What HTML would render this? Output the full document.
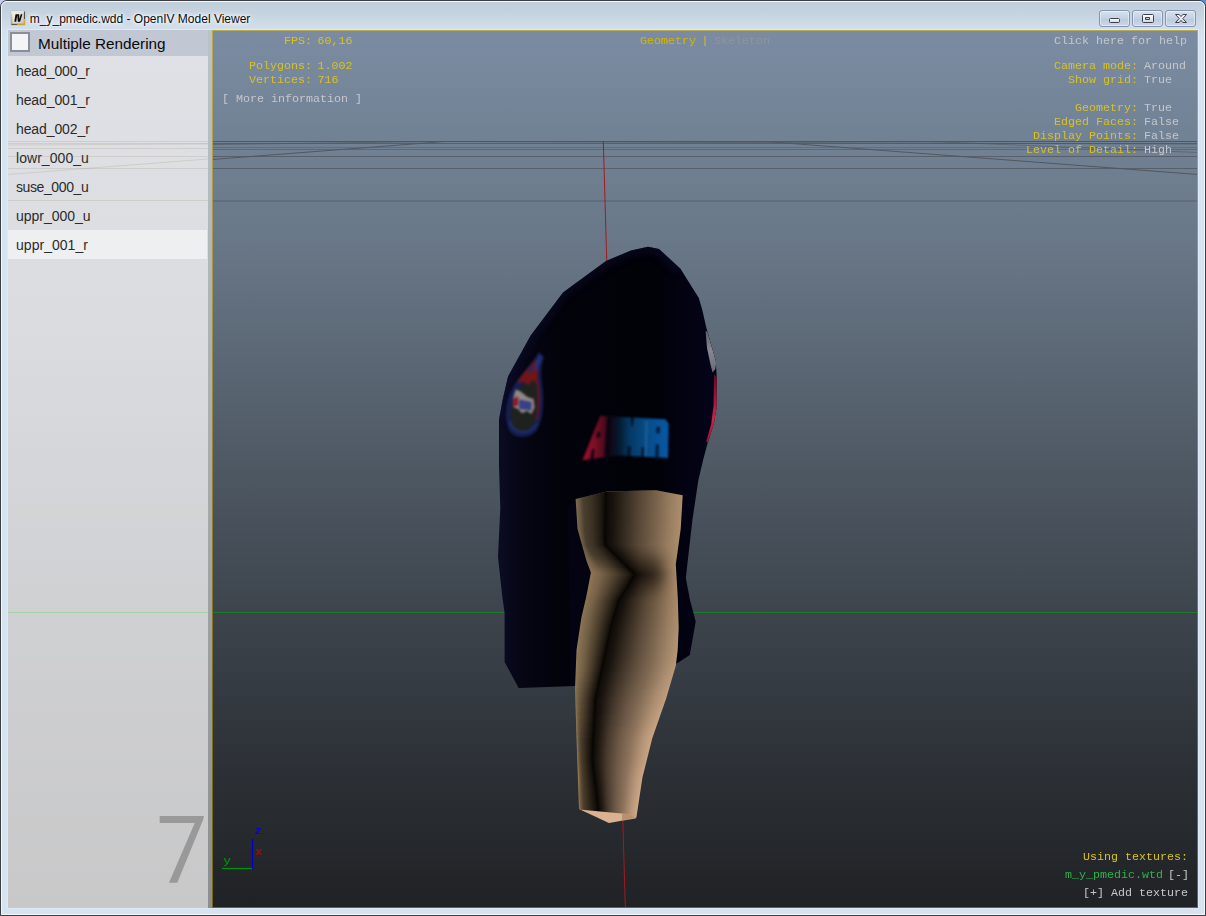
<!DOCTYPE html>
<html>
<head>
<meta charset="utf-8">
<title>m_y_pmedic.wdd - OpenIV Model Viewer</title>
<style>
html,body{margin:0;padding:0;}
body{width:1206px;height:916px;overflow:hidden;background:#5b8fd6;font-family:"Liberation Sans",sans-serif;position:relative;}
#win{position:absolute;left:0;top:0;width:1204px;height:914px;border:1px solid #3d3e41;border-radius:7px 7px 0 0;
 background:linear-gradient(#c0cddb 0px,#c5d2df 12px,#d3e0ee 30px,#d6e3f1 40px);}
#win:before{content:"";position:absolute;left:0;top:0;right:0;bottom:0;border:1px solid #f2f7fc;border-radius:6px 6px 0 0;}
#title{position:absolute;left:28.8px;top:11px;font-size:12px;line-height:14px;color:#0c0c10;white-space:nowrap;letter-spacing:0px;
 text-shadow:0 0 6px #fff,0 0 6px #fff,0 0 3px #fff;}
.cb{position:absolute;top:9px;width:29px;height:15px;border:1px solid #8494b4;border-radius:3px;
 background:linear-gradient(#d6e1ee,#c3d1e2 50%,#b9c9dd 51%,#cbd8e8);box-shadow:inset 0 0 0 1px rgba(255,255,255,.45);}
#left{position:absolute;left:8px;top:30px;width:200px;height:878px;background:linear-gradient(#dfe1e6 0px,#dcdde1 260px,#d0d1d3 560px,#c8c8c9 878px);}
#hdr{position:absolute;left:0;top:0;width:204px;height:26px;background:#c1c7d3;}
#chk{position:absolute;left:2px;top:2px;width:16px;height:16px;border:2px solid #8a8f97;background:#f3f4f6;}
#hdrtxt{position:absolute;left:30px;top:3.6px;font-size:15.3px;line-height:20px;color:#0a0a0a;white-space:nowrap;}
.it{position:absolute;left:0;width:199px;height:29px;letter-spacing:-0.1px;font-size:14px;line-height:30px;color:#2b2b2b;text-indent:8px;white-space:nowrap;}
#split{position:absolute;left:208px;top:30px;width:4px;height:878px;background:linear-gradient(#bcc1cb,#a6a8ac 55%,#8c8d90);}
#vp{position:absolute;left:212px;top:30px;width:986px;height:878px;background:linear-gradient(#7b8ca2 0px,#6a7989 200px,#4e5863 440px,#3b424a 600px,#2a2e33 760px,#202225 878px);overflow:hidden;}
#vp svg{position:absolute;left:0;top:0;}
#vpb{position:absolute;left:212px;top:30px;width:984px;height:876px;border:1px solid #a89c3c;border-image:linear-gradient(#b6aa4c,#a2953a 30%,#7d6e18 75%,#74650f) 1;pointer-events:none;}
.h{position:absolute;font-family:"Liberation Mono",monospace;font-size:11.67px;line-height:14px;white-space:pre;color:#d8c222;}
.g{color:#c4c7cc;}
.v{position:relative;left:-1px;}
</style>
</head>
<body>
<div style="position:absolute;left:0;top:0;width:8px;height:8px;background:#c6cef2"></div>
<div id="win">
 <div id="title">m_y_pmedic.wdd - OpenIV Model Viewer</div>
 <div class="cb" style="left:1098px"></div>
 <div class="cb" style="left:1131px"></div>
 <div class="cb" style="left:1164px"></div>
</div>

<svg id="chrome" width="1206" height="32" style="position:absolute;left:0;top:0">
 <defs>
  <linearGradient id="icg" x1="0" y1="0" x2="0" y2="1"><stop offset="0" stop-color="#f3ead0"/><stop offset=".35" stop-color="#e6c464"/><stop offset="1" stop-color="#cf9c1e"/></linearGradient>
  <linearGradient id="ici" x1="0" y1="0" x2="1" y2="1"><stop offset="0" stop-color="#f4f4f4"/><stop offset="1" stop-color="#c6c6c6"/></linearGradient>
  <linearGradient id="glg" x1="0" y1="0" x2="0" y2="1"><stop offset="0" stop-color="#ffffff"/><stop offset="1" stop-color="#d4d6da"/></linearGradient>
  <filter id="icb" color-interpolation-filters="sRGB"><feGaussianBlur stdDeviation="0.35"/></filter>
 </defs>
 <g filter="url(#icb)">
  <rect x="10.6" y="10.6" width="14.8" height="14.8" rx="1" fill="#9db0c8" opacity=".5"/>
  <rect x="11" y="11" width="14" height="14" rx=".8" fill="url(#icg)"/>
  <path d="M24.4 11.5V19" stroke="#4a4a48" stroke-width="1.1"/>
  <path d="M11.5 24.5H17" stroke="#5a5648" stroke-width="1"/>
  <rect x="12.4" y="12.2" width="11.2" height="11.3" fill="url(#ici)"/>
  <path d="M14.3 21.8L15.5 14.3L17.4 14.3L16.2 21.8Z M17.1 14.3L19.1 14.3L19.5 19L20.7 14.3L22.4 14.3L20.1 21.8L17.9 21.8Z" fill="#0a0a0a"/>
 </g>
 <!-- caption glyphs -->
 <g stroke="#3c414d" stroke-width="1" fill="url(#glg)">
  <rect x="1109.5" y="18.5" width="10" height="4" rx="1"/>
  <path d="M1143.5 14.5h9a1 1 0 0 1 1 1v6a1 1 0 0 1 -1 1h-9a1 1 0 0 1 -1 -1v-6a1 1 0 0 1 1 -1Z M1145.5 17.5v2h4v-2Z" fill-rule="evenodd"/>
  <path d="M1175.5 14.5h3.7l1.8 2.1l1.8 -2.1h3.7l-3.7 4l3.7 4h-3.7l-1.8 -2.1l-1.8 2.1h-3.7l3.7 -4Z" stroke-linejoin="round"/>
 </g>
</svg>
<div style="position:absolute;left:7px;top:29px;width:1190px;height:878px;border:1px solid #dde9f8"></div>
<div id="left">
 <div id="hdr"><div id="chk"></div><div id="hdrtxt">Multiple Rendering</div></div>
 <div class="it" style="top:26px">head_000_r</div>
 <div class="it" style="top:55px">head_001_r</div>
 <div class="it" style="top:84px">head_002_r</div>
 <div class="it" style="top:113px;letter-spacing:.05px">lowr_000_u</div>
 <div class="it" style="top:142px;letter-spacing:-.4px">suse_000_u</div>
 <div class="it" style="top:171px;letter-spacing:-.03px">uppr_000_u</div>
 <div class="it" style="top:200px;background:#eeeff1;letter-spacing:.03px">uppr_001_r</div>
 <svg style="position:absolute;left:0;top:0" width="200" height="877" viewBox="8 30 200 877"><path d="M159.7 815.9H204L203.2 819.6L177.3 882.8H169L194.7 822.9H159.7Z" fill="#999999"/><path d="M8 612.5H208" stroke="#6fd070" stroke-width="1" opacity=".4"/><g stroke="#9c8c74" stroke-width="1" fill="none" opacity=".22"><path d="M8 141.5H208M8 143.5H208M8 148.5H208M8 156.5H208M8 168.5H208M8 200.5H208M8 174.5L208 159M8 145L208 144"/></g></svg>
</div>
<div id="split"></div>
<div id="vp">
<svg id="scene" width="986" height="878" viewBox="212 30 986 878">
<defs>
 <filter color-interpolation-filters="sRGB" id="b1" x="-20%" y="-20%" width="140%" height="140%"><feGaussianBlur stdDeviation="0.6"/></filter>
 <filter color-interpolation-filters="sRGB" id="b08" x="-10%" y="-5%" width="120%" height="110%"><feGaussianBlur stdDeviation="0.6"/></filter>
 <filter color-interpolation-filters="sRGB" id="b09" x="-20%" y="-20%" width="140%" height="140%"><feGaussianBlur stdDeviation="0.9"/></filter>
 <filter color-interpolation-filters="sRGB" id="b2" x="-30%" y="-30%" width="160%" height="160%"><feGaussianBlur stdDeviation="2"/></filter>
 <filter color-interpolation-filters="sRGB" id="b4" x="-50%" y="-50%" width="200%" height="200%"><feGaussianBlur stdDeviation="4"/></filter>
 <filter color-interpolation-filters="sRGB" id="b7" x="-50%" y="-50%" width="200%" height="200%"><feGaussianBlur stdDeviation="7"/></filter>
</defs>
<!-- grid -->
<g stroke="#3d3d3f" stroke-width="1" fill="none" opacity=".6">
 <path d="M212 141.5H1198"/>
 <path d="M212 143.5H1198" opacity=".8"/>
 <path d="M212 144.5L440 141.5L1198 144" opacity=".7"/>
 <path d="M212 147.5H1198" opacity=".45"/>
 <path d="M212 149.5H1198" opacity=".6"/>
 <path d="M212 156.5H1198" opacity=".8"/>
 <path d="M212 168.5H1198" opacity=".8"/>
 <path d="M212 201H1198" stroke-width="1.2" opacity=".7"/>
 <path d="M212 159.5L445 141.5"/>
 <path d="M765 141.5L1198 174.5"/>
 <path d="M930 141.5L1198 152.5" opacity=".6"/>
</g>
<!-- green horizon -->
<path d="M212 612.5H1198" stroke="#1f7a2e" stroke-width="1"/>
<!-- red axis -->
<path d="M603.3 141L625.3 907" stroke="#a01c22" stroke-width="1" fill="none"/>

<defs>
 <linearGradient id="shg" x1="498" y1="0" x2="716" y2="0" gradientUnits="userSpaceOnUse">
  <stop offset="0" stop-color="#0b0b25"/><stop offset=".1" stop-color="#060615"/><stop offset=".3" stop-color="#02020a"/><stop offset=".7" stop-color="#010108"/><stop offset="1" stop-color="#04041a"/>
 </linearGradient>
 <linearGradient id="skin" x1="575" y1="0" x2="682" y2="0" gradientUnits="userSpaceOnUse">
  <stop offset="0" stop-color="#b08f6a"/><stop offset=".5" stop-color="#a58663"/><stop offset="1" stop-color="#c39c79"/>
 </linearGradient>
 <clipPath id="armclip"><path id="armp" d="M575.6 499L607 491.4L656 490.2L682.7 495.3L680.7 529L675.8 564.5L677.8 598L678.7 627.4L677.7 650L675.8 665.7L666 699L652.2 738.4L642.4 777.7L636.5 817L635.5 818.6L609 823L579 809L576.5 738.4L575 689L576.5 650L581.4 617.6L586.4 596L590.9 572.4L586.4 560.6L577.5 529Z"/></clipPath>
 <clipPath id="shclip"><path d="M648 246.8L659 249L680.5 268.8L698.8 298L702.3 310L706.4 328L715.8 360.8L716.8 378.8L716.5 408.3L713.6 424.6L707.8 442.6L703.1 460L698.4 480L692.4 520L685.8 578L690 600L695.7 621.5L689.8 655L678 662.8L640 680L575 686L518.7 688L504.6 662L504.6 613L502.3 596.7L498 557L500.3 508L499 465.6L499 419.8L502.6 400L508 376.6L530.7 335.6L563 292.5L606 261L631 250.5Z"/></clipPath>
</defs>
<!-- shirt -->
<defs>
 <linearGradient id="amrg" x1="582" y1="0" x2="669" y2="0" gradientUnits="userSpaceOnUse">
  <stop offset="0" stop-color="#96122c"/><stop offset=".12" stop-color="#860f28"/><stop offset=".26" stop-color="#4a0a1c"/><stop offset=".34" stop-color="#12081a"/><stop offset=".42" stop-color="#04182c"/><stop offset=".55" stop-color="#063a66"/><stop offset=".75" stop-color="#074c88"/><stop offset="1" stop-color="#0958a6"/>
 </linearGradient>
 <linearGradient id="wst" x1="0" y1="330" x2="0" y2="372" gradientUnits="userSpaceOnUse"><stop offset="0" stop-color="#7c7c86"/><stop offset=".5" stop-color="#b4b4ba"/><stop offset="1" stop-color="#8c8c94"/></linearGradient>
 <linearGradient id="mst" x1="0" y1="374" x2="0" y2="444" gradientUnits="userSpaceOnUse"><stop offset="0" stop-color="#5a0c26"/><stop offset=".35" stop-color="#a01638"/><stop offset=".65" stop-color="#d2204c"/><stop offset="1" stop-color="#8a1232"/></linearGradient>
</defs>
<g clip-path="url(#shclip)">
 <rect x="490" y="240" width="235" height="455" fill="url(#shg)"/>
 <path d="M499 420L508 376L531 335L563 292L606 261L631 250L648 247L659 249L680 269" stroke="#0e0e30" stroke-width="8" fill="none" filter="url(#b4)" opacity=".7"/>
 <!-- inner back of shirt next to arm -->
 <path d="M568 508L576 500L577 530L590 572L580 620L576 686L570 686Z" fill="#06061a" filter="url(#b1)" opacity=".55"/>
 <!-- AMR sleeve logo -->
 <g filter="url(#b09)">
  <path d="M600.2 415.8L665.5 419.3L668.6 423.7L668.1 458L618.5 455.6L582.4 460.2Z" fill="url(#amrg)"/>
  <path d="M589.8 461L592 449L594.5 449L593.7 461Z M595.5 437.5L598 431.5L600.5 432L600 437.6Z M604 460L607 417L611 417L610 460Z" fill="#030310" opacity=".85"/>
  <path d="M630.5 416L634.2 416.5L633 426L631 426Z M627 457L628 446L630.8 446L630.5 457Z M641 457L641.6 447L644 447L643.8 457Z M656.4 427L660 427L659.6 433.5L656.2 433Z M655.3 457.5L655.8 444.5L658.8 444.5L658.5 457.5Z" fill="#030a18" opacity=".75"/>
  <path d="M645.6 421L647.6 421L646.6 456L644.8 456Z" fill="#3a78a8" opacity=".5"/>
 </g>
 <!-- badge -->
 <g filter="url(#b09)" opacity=".88">
  <path d="M539 352C533 363 518.5 375 510.5 392C504.5 406 504.5 425 511 432.5C517.5 439.5 531 438.5 537.5 429C543.5 418 544.5 400 542 384C540.5 372 541.5 362 544.5 357Z" fill="#18225a"/>
  <path d="M533 378.5C525 382 516 389.5 512 401.5C509.3 414 510 424.5 515.3 429C521.5 433.5 530 431 534 423C538 412 538.5 396 536.5 384Z" fill="#232721"/>
  <path d="M536 359.5C531 366 522 373 516.5 384L523 381.5L528 385L533 380L537.6 384.5C537.4 375 538 367 539.6 360Z" fill="#82181a"/>
  <path d="M538 379C541 392 540.4 408 537.2 421L535.6 420C538 408 538 392 536 380Z" fill="#741824"/>
  <path d="M538.6 355L542.2 357.5L536.6 371L533.6 369.6Z" fill="#28388c"/>
  <path d="M528 372L531 366L532.5 367L530 374Z" fill="#223078"/>
  <path d="M515.5 389.5L520 391L527.5 397L533.6 399L534.6 407.5L531.5 414L527 411L522 413.2L518 409L513.3 407L513.2 398Z" fill="#a39b93"/>
  <path d="M513.4 398.5L518 396.5L518.2 405.5L513.2 406.5Z" fill="#a41a2e"/>
  <path d="M519 399.5L531.6 402L531.2 410.6L519.2 409Z" fill="#2e3c94" opacity=".85"/>
  <path d="M509.8 421C512.5 433.5 528 437 537.3 423.5" stroke="#26367a" stroke-width="2.2" fill="none"/>
 </g>
 <!-- right edge stripes -->
 <path d="M705.6 331L707.4 331.5L716.2 362L715.4 369L712.6 372.5L710.6 365L707 348Z" fill="url(#wst)" filter="url(#b1)" opacity=".75"/>
 <path d="M714 374.5L717 377L717 408L714 426L708.5 443L706.2 441.5L711.2 424L713.6 405L713.8 385Z" fill="url(#mst)" filter="url(#b1)"/>
</g>
<!--ARM-BEGIN-->
<defs><linearGradient id="vel" x1="0" y1="488" x2="0" y2="812" gradientUnits="userSpaceOnUse"><stop offset="0.000" stop-color="#7c6a4f"/><stop offset="0.207" stop-color="#7c6a4f"/><stop offset="0.269" stop-color="#94795a"/><stop offset="0.469" stop-color="#8c7756"/><stop offset="0.787" stop-color="#967c58"/><stop offset="1.000" stop-color="#967c58"/></linearGradient><linearGradient id="ver" x1="0" y1="488" x2="0" y2="812" gradientUnits="userSpaceOnUse"><stop offset="0.000" stop-color="#ad8e6e"/><stop offset="0.176" stop-color="#ad8e6e"/><stop offset="0.269" stop-color="#a48463"/><stop offset="0.469" stop-color="#b29474"/><stop offset="0.787" stop-color="#cba686"/><stop offset="1.000" stop-color="#cba686"/></linearGradient><linearGradient id="alu0"><stop offset="0" stop-color="#0a0704" stop-opacity="0.00"/><stop offset="0.1" stop-color="#0a0704" stop-opacity="0.14"/><stop offset="0.25" stop-color="#0a0704" stop-opacity="0.43"/><stop offset="0.55" stop-color="#0a0704" stop-opacity="0.58"/><stop offset="0.82" stop-color="#0a0704" stop-opacity="0.80"/><stop offset="1" stop-color="#0a0704" stop-opacity="1.00"/></linearGradient><linearGradient id="ar0"><stop offset="0" stop-color="#0a0704" stop-opacity="0.99"/><stop offset="0.1" stop-color="#0a0704" stop-opacity="0.91"/><stop offset="0.25" stop-color="#0a0704" stop-opacity="0.74"/><stop offset="0.45" stop-color="#0a0704" stop-opacity="0.52"/><stop offset="0.65" stop-color="#0a0704" stop-opacity="0.33"/><stop offset="0.85" stop-color="#0a0704" stop-opacity="0.12"/><stop offset="1" stop-color="#0a0704" stop-opacity="0.00"/></linearGradient><linearGradient id="alu2"><stop offset="0" stop-color="#0a0704" stop-opacity="0.00"/><stop offset="0.1" stop-color="#0a0704" stop-opacity="0.13"/><stop offset="0.25" stop-color="#0a0704" stop-opacity="0.40"/><stop offset="0.55" stop-color="#0a0704" stop-opacity="0.57"/><stop offset="0.82" stop-color="#0a0704" stop-opacity="0.80"/><stop offset="1" stop-color="#0a0704" stop-opacity="1.00"/></linearGradient><linearGradient id="alu3"><stop offset="0" stop-color="#0a0704" stop-opacity="0.01"/><stop offset="0.1" stop-color="#0a0704" stop-opacity="0.13"/><stop offset="0.25" stop-color="#0a0704" stop-opacity="0.38"/><stop offset="0.55" stop-color="#0a0704" stop-opacity="0.56"/><stop offset="0.82" stop-color="#0a0704" stop-opacity="0.80"/><stop offset="1" stop-color="#0a0704" stop-opacity="1.00"/></linearGradient><linearGradient id="alu5"><stop offset="0" stop-color="#0a0704" stop-opacity="0.01"/><stop offset="0.1" stop-color="#0a0704" stop-opacity="0.13"/><stop offset="0.25" stop-color="#0a0704" stop-opacity="0.35"/><stop offset="0.55" stop-color="#0a0704" stop-opacity="0.55"/><stop offset="0.82" stop-color="#0a0704" stop-opacity="0.79"/><stop offset="1" stop-color="#0a0704" stop-opacity="1.00"/></linearGradient><linearGradient id="alu7"><stop offset="0" stop-color="#0a0704" stop-opacity="0.01"/><stop offset="0.1" stop-color="#0a0704" stop-opacity="0.12"/><stop offset="0.25" stop-color="#0a0704" stop-opacity="0.32"/><stop offset="0.55" stop-color="#0a0704" stop-opacity="0.53"/><stop offset="0.82" stop-color="#0a0704" stop-opacity="0.79"/><stop offset="1" stop-color="#0a0704" stop-opacity="1.00"/></linearGradient><linearGradient id="alu8"><stop offset="0" stop-color="#0a0704" stop-opacity="0.02"/><stop offset="0.1" stop-color="#0a0704" stop-opacity="0.12"/><stop offset="0.25" stop-color="#0a0704" stop-opacity="0.30"/><stop offset="0.55" stop-color="#0a0704" stop-opacity="0.53"/><stop offset="0.82" stop-color="#0a0704" stop-opacity="0.79"/><stop offset="1" stop-color="#0a0704" stop-opacity="1.00"/></linearGradient><linearGradient id="alu10"><stop offset="0" stop-color="#0a0704" stop-opacity="0.02"/><stop offset="0.1" stop-color="#0a0704" stop-opacity="0.11"/><stop offset="0.25" stop-color="#0a0704" stop-opacity="0.27"/><stop offset="0.55" stop-color="#0a0704" stop-opacity="0.52"/><stop offset="0.82" stop-color="#0a0704" stop-opacity="0.79"/><stop offset="1" stop-color="#0a0704" stop-opacity="1.00"/></linearGradient><linearGradient id="alu12"><stop offset="0" stop-color="#0a0704" stop-opacity="0.03"/><stop offset="0.1" stop-color="#0a0704" stop-opacity="0.11"/><stop offset="0.25" stop-color="#0a0704" stop-opacity="0.23"/><stop offset="0.55" stop-color="#0a0704" stop-opacity="0.50"/><stop offset="0.82" stop-color="#0a0704" stop-opacity="0.78"/><stop offset="1" stop-color="#0a0704" stop-opacity="1.00"/></linearGradient><linearGradient id="alu13"><stop offset="0" stop-color="#0a0704" stop-opacity="0.03"/><stop offset="0.1" stop-color="#0a0704" stop-opacity="0.10"/><stop offset="0.25" stop-color="#0a0704" stop-opacity="0.22"/><stop offset="0.55" stop-color="#0a0704" stop-opacity="0.50"/><stop offset="0.82" stop-color="#0a0704" stop-opacity="0.78"/><stop offset="1" stop-color="#0a0704" stop-opacity="1.00"/></linearGradient><linearGradient id="alm0"><stop offset="0" stop-color="#0a0704" stop-opacity="0.03"/><stop offset="0.1" stop-color="#0a0704" stop-opacity="0.10"/><stop offset="0.25" stop-color="#0a0704" stop-opacity="0.20"/><stop offset="0.55" stop-color="#0a0704" stop-opacity="0.49"/><stop offset="0.82" stop-color="#0a0704" stop-opacity="0.78"/><stop offset="1" stop-color="#0a0704" stop-opacity="1.00"/></linearGradient><linearGradient id="ar1"><stop offset="0" stop-color="#0a0704" stop-opacity="0.99"/><stop offset="0.1" stop-color="#0a0704" stop-opacity="0.91"/><stop offset="0.25" stop-color="#0a0704" stop-opacity="0.74"/><stop offset="0.45" stop-color="#0a0704" stop-opacity="0.52"/><stop offset="0.65" stop-color="#0a0704" stop-opacity="0.33"/><stop offset="0.85" stop-color="#0a0704" stop-opacity="0.12"/><stop offset="1" stop-color="#0a0704" stop-opacity="0.00"/></linearGradient><linearGradient id="ar2"><stop offset="0" stop-color="#0a0704" stop-opacity="0.99"/><stop offset="0.1" stop-color="#0a0704" stop-opacity="0.91"/><stop offset="0.25" stop-color="#0a0704" stop-opacity="0.73"/><stop offset="0.45" stop-color="#0a0704" stop-opacity="0.51"/><stop offset="0.65" stop-color="#0a0704" stop-opacity="0.33"/><stop offset="0.85" stop-color="#0a0704" stop-opacity="0.12"/><stop offset="1" stop-color="#0a0704" stop-opacity="0.00"/></linearGradient><linearGradient id="ar3"><stop offset="0" stop-color="#0a0704" stop-opacity="0.99"/><stop offset="0.1" stop-color="#0a0704" stop-opacity="0.91"/><stop offset="0.25" stop-color="#0a0704" stop-opacity="0.73"/><stop offset="0.45" stop-color="#0a0704" stop-opacity="0.51"/><stop offset="0.65" stop-color="#0a0704" stop-opacity="0.33"/><stop offset="0.85" stop-color="#0a0704" stop-opacity="0.12"/><stop offset="1" stop-color="#0a0704" stop-opacity="0.00"/></linearGradient><linearGradient id="alm1"><stop offset="0" stop-color="#0a0704" stop-opacity="0.03"/><stop offset="0.1" stop-color="#0a0704" stop-opacity="0.11"/><stop offset="0.25" stop-color="#0a0704" stop-opacity="0.22"/><stop offset="0.55" stop-color="#0a0704" stop-opacity="0.51"/><stop offset="0.82" stop-color="#0a0704" stop-opacity="0.79"/><stop offset="1" stop-color="#0a0704" stop-opacity="1.00"/></linearGradient><linearGradient id="ar4"><stop offset="0" stop-color="#0a0704" stop-opacity="0.99"/><stop offset="0.1" stop-color="#0a0704" stop-opacity="0.90"/><stop offset="0.25" stop-color="#0a0704" stop-opacity="0.72"/><stop offset="0.45" stop-color="#0a0704" stop-opacity="0.51"/><stop offset="0.65" stop-color="#0a0704" stop-opacity="0.33"/><stop offset="0.85" stop-color="#0a0704" stop-opacity="0.12"/><stop offset="1" stop-color="#0a0704" stop-opacity="0.00"/></linearGradient><linearGradient id="alm2"><stop offset="0" stop-color="#0a0704" stop-opacity="0.03"/><stop offset="0.1" stop-color="#0a0704" stop-opacity="0.13"/><stop offset="0.25" stop-color="#0a0704" stop-opacity="0.25"/><stop offset="0.55" stop-color="#0a0704" stop-opacity="0.52"/><stop offset="0.82" stop-color="#0a0704" stop-opacity="0.80"/><stop offset="1" stop-color="#0a0704" stop-opacity="1.00"/></linearGradient><linearGradient id="ar5"><stop offset="0" stop-color="#0a0704" stop-opacity="0.99"/><stop offset="0.1" stop-color="#0a0704" stop-opacity="0.90"/><stop offset="0.25" stop-color="#0a0704" stop-opacity="0.72"/><stop offset="0.45" stop-color="#0a0704" stop-opacity="0.51"/><stop offset="0.65" stop-color="#0a0704" stop-opacity="0.33"/><stop offset="0.85" stop-color="#0a0704" stop-opacity="0.12"/><stop offset="1" stop-color="#0a0704" stop-opacity="0.00"/></linearGradient><linearGradient id="alm3"><stop offset="0" stop-color="#0a0704" stop-opacity="0.02"/><stop offset="0.1" stop-color="#0a0704" stop-opacity="0.14"/><stop offset="0.25" stop-color="#0a0704" stop-opacity="0.27"/><stop offset="0.55" stop-color="#0a0704" stop-opacity="0.54"/><stop offset="0.82" stop-color="#0a0704" stop-opacity="0.81"/><stop offset="1" stop-color="#0a0704" stop-opacity="1.00"/></linearGradient><linearGradient id="ar6"><stop offset="0" stop-color="#0a0704" stop-opacity="0.99"/><stop offset="0.1" stop-color="#0a0704" stop-opacity="0.90"/><stop offset="0.25" stop-color="#0a0704" stop-opacity="0.71"/><stop offset="0.45" stop-color="#0a0704" stop-opacity="0.50"/><stop offset="0.65" stop-color="#0a0704" stop-opacity="0.33"/><stop offset="0.85" stop-color="#0a0704" stop-opacity="0.12"/><stop offset="1" stop-color="#0a0704" stop-opacity="0.00"/></linearGradient><linearGradient id="alm4"><stop offset="0" stop-color="#0a0704" stop-opacity="0.02"/><stop offset="0.1" stop-color="#0a0704" stop-opacity="0.16"/><stop offset="0.25" stop-color="#0a0704" stop-opacity="0.29"/><stop offset="0.55" stop-color="#0a0704" stop-opacity="0.56"/><stop offset="0.82" stop-color="#0a0704" stop-opacity="0.82"/><stop offset="1" stop-color="#0a0704" stop-opacity="1.00"/></linearGradient><linearGradient id="ar7"><stop offset="0" stop-color="#0a0704" stop-opacity="0.99"/><stop offset="0.1" stop-color="#0a0704" stop-opacity="0.90"/><stop offset="0.25" stop-color="#0a0704" stop-opacity="0.71"/><stop offset="0.45" stop-color="#0a0704" stop-opacity="0.50"/><stop offset="0.65" stop-color="#0a0704" stop-opacity="0.32"/><stop offset="0.85" stop-color="#0a0704" stop-opacity="0.11"/><stop offset="1" stop-color="#0a0704" stop-opacity="0.00"/></linearGradient><linearGradient id="alm5"><stop offset="0" stop-color="#0a0704" stop-opacity="0.02"/><stop offset="0.1" stop-color="#0a0704" stop-opacity="0.17"/><stop offset="0.25" stop-color="#0a0704" stop-opacity="0.32"/><stop offset="0.55" stop-color="#0a0704" stop-opacity="0.58"/><stop offset="0.82" stop-color="#0a0704" stop-opacity="0.83"/><stop offset="1" stop-color="#0a0704" stop-opacity="1.00"/></linearGradient><linearGradient id="ar8"><stop offset="0" stop-color="#0a0704" stop-opacity="0.99"/><stop offset="0.1" stop-color="#0a0704" stop-opacity="0.90"/><stop offset="0.25" stop-color="#0a0704" stop-opacity="0.71"/><stop offset="0.45" stop-color="#0a0704" stop-opacity="0.50"/><stop offset="0.65" stop-color="#0a0704" stop-opacity="0.32"/><stop offset="0.85" stop-color="#0a0704" stop-opacity="0.11"/><stop offset="1" stop-color="#0a0704" stop-opacity="0.00"/></linearGradient><linearGradient id="alm6"><stop offset="0" stop-color="#0a0704" stop-opacity="0.02"/><stop offset="0.1" stop-color="#0a0704" stop-opacity="0.19"/><stop offset="0.25" stop-color="#0a0704" stop-opacity="0.34"/><stop offset="0.55" stop-color="#0a0704" stop-opacity="0.59"/><stop offset="0.82" stop-color="#0a0704" stop-opacity="0.84"/><stop offset="1" stop-color="#0a0704" stop-opacity="1.00"/></linearGradient><linearGradient id="alm7"><stop offset="0" stop-color="#0a0704" stop-opacity="0.01"/><stop offset="0.1" stop-color="#0a0704" stop-opacity="0.20"/><stop offset="0.25" stop-color="#0a0704" stop-opacity="0.36"/><stop offset="0.55" stop-color="#0a0704" stop-opacity="0.61"/><stop offset="0.82" stop-color="#0a0704" stop-opacity="0.84"/><stop offset="1" stop-color="#0a0704" stop-opacity="1.00"/></linearGradient><linearGradient id="ar9"><stop offset="0" stop-color="#0a0704" stop-opacity="0.99"/><stop offset="0.1" stop-color="#0a0704" stop-opacity="0.90"/><stop offset="0.25" stop-color="#0a0704" stop-opacity="0.70"/><stop offset="0.45" stop-color="#0a0704" stop-opacity="0.49"/><stop offset="0.65" stop-color="#0a0704" stop-opacity="0.32"/><stop offset="0.85" stop-color="#0a0704" stop-opacity="0.11"/><stop offset="1" stop-color="#0a0704" stop-opacity="0.00"/></linearGradient><linearGradient id="alm8"><stop offset="0" stop-color="#0a0704" stop-opacity="0.01"/><stop offset="0.1" stop-color="#0a0704" stop-opacity="0.21"/><stop offset="0.25" stop-color="#0a0704" stop-opacity="0.39"/><stop offset="0.55" stop-color="#0a0704" stop-opacity="0.63"/><stop offset="0.82" stop-color="#0a0704" stop-opacity="0.85"/><stop offset="1" stop-color="#0a0704" stop-opacity="1.00"/></linearGradient><linearGradient id="ar10"><stop offset="0" stop-color="#0a0704" stop-opacity="0.99"/><stop offset="0.1" stop-color="#0a0704" stop-opacity="0.90"/><stop offset="0.25" stop-color="#0a0704" stop-opacity="0.70"/><stop offset="0.45" stop-color="#0a0704" stop-opacity="0.49"/><stop offset="0.65" stop-color="#0a0704" stop-opacity="0.32"/><stop offset="0.85" stop-color="#0a0704" stop-opacity="0.11"/><stop offset="1" stop-color="#0a0704" stop-opacity="0.00"/></linearGradient><linearGradient id="alm9"><stop offset="0" stop-color="#0a0704" stop-opacity="0.01"/><stop offset="0.1" stop-color="#0a0704" stop-opacity="0.23"/><stop offset="0.25" stop-color="#0a0704" stop-opacity="0.41"/><stop offset="0.55" stop-color="#0a0704" stop-opacity="0.64"/><stop offset="0.82" stop-color="#0a0704" stop-opacity="0.86"/><stop offset="1" stop-color="#0a0704" stop-opacity="1.00"/></linearGradient><linearGradient id="ar11"><stop offset="0" stop-color="#0a0704" stop-opacity="0.99"/><stop offset="0.1" stop-color="#0a0704" stop-opacity="0.89"/><stop offset="0.25" stop-color="#0a0704" stop-opacity="0.69"/><stop offset="0.45" stop-color="#0a0704" stop-opacity="0.49"/><stop offset="0.65" stop-color="#0a0704" stop-opacity="0.32"/><stop offset="0.85" stop-color="#0a0704" stop-opacity="0.11"/><stop offset="1" stop-color="#0a0704" stop-opacity="0.00"/></linearGradient><linearGradient id="alm10"><stop offset="0" stop-color="#0a0704" stop-opacity="0.01"/><stop offset="0.1" stop-color="#0a0704" stop-opacity="0.24"/><stop offset="0.25" stop-color="#0a0704" stop-opacity="0.44"/><stop offset="0.55" stop-color="#0a0704" stop-opacity="0.66"/><stop offset="0.82" stop-color="#0a0704" stop-opacity="0.87"/><stop offset="1" stop-color="#0a0704" stop-opacity="1.00"/></linearGradient><linearGradient id="ar12"><stop offset="0" stop-color="#0a0704" stop-opacity="0.99"/><stop offset="0.1" stop-color="#0a0704" stop-opacity="0.89"/><stop offset="0.25" stop-color="#0a0704" stop-opacity="0.69"/><stop offset="0.45" stop-color="#0a0704" stop-opacity="0.49"/><stop offset="0.65" stop-color="#0a0704" stop-opacity="0.32"/><stop offset="0.85" stop-color="#0a0704" stop-opacity="0.11"/><stop offset="1" stop-color="#0a0704" stop-opacity="0.00"/></linearGradient><linearGradient id="alm11"><stop offset="0" stop-color="#0a0704" stop-opacity="0.01"/><stop offset="0.1" stop-color="#0a0704" stop-opacity="0.26"/><stop offset="0.25" stop-color="#0a0704" stop-opacity="0.46"/><stop offset="0.55" stop-color="#0a0704" stop-opacity="0.68"/><stop offset="0.82" stop-color="#0a0704" stop-opacity="0.88"/><stop offset="1" stop-color="#0a0704" stop-opacity="1.00"/></linearGradient><linearGradient id="ar13"><stop offset="0" stop-color="#0a0704" stop-opacity="0.99"/><stop offset="0.1" stop-color="#0a0704" stop-opacity="0.89"/><stop offset="0.25" stop-color="#0a0704" stop-opacity="0.68"/><stop offset="0.45" stop-color="#0a0704" stop-opacity="0.48"/><stop offset="0.65" stop-color="#0a0704" stop-opacity="0.32"/><stop offset="0.85" stop-color="#0a0704" stop-opacity="0.11"/><stop offset="1" stop-color="#0a0704" stop-opacity="0.00"/></linearGradient><linearGradient id="alm12"><stop offset="0" stop-color="#0a0704" stop-opacity="0.00"/><stop offset="0.1" stop-color="#0a0704" stop-opacity="0.27"/><stop offset="0.25" stop-color="#0a0704" stop-opacity="0.48"/><stop offset="0.55" stop-color="#0a0704" stop-opacity="0.70"/><stop offset="0.82" stop-color="#0a0704" stop-opacity="0.89"/><stop offset="1" stop-color="#0a0704" stop-opacity="1.00"/></linearGradient><linearGradient id="alm13"><stop offset="0" stop-color="#0a0704" stop-opacity="0.00"/><stop offset="0.1" stop-color="#0a0704" stop-opacity="0.29"/><stop offset="0.25" stop-color="#0a0704" stop-opacity="0.51"/><stop offset="0.55" stop-color="#0a0704" stop-opacity="0.71"/><stop offset="0.82" stop-color="#0a0704" stop-opacity="0.90"/><stop offset="1" stop-color="#0a0704" stop-opacity="1.00"/></linearGradient><linearGradient id="ar14"><stop offset="0" stop-color="#0a0704" stop-opacity="0.99"/><stop offset="0.1" stop-color="#0a0704" stop-opacity="0.89"/><stop offset="0.25" stop-color="#0a0704" stop-opacity="0.68"/><stop offset="0.45" stop-color="#0a0704" stop-opacity="0.48"/><stop offset="0.65" stop-color="#0a0704" stop-opacity="0.32"/><stop offset="0.85" stop-color="#0a0704" stop-opacity="0.11"/><stop offset="1" stop-color="#0a0704" stop-opacity="0.00"/></linearGradient><linearGradient id="alm14"><stop offset="0" stop-color="#0a0704" stop-opacity="0.00"/><stop offset="0.1" stop-color="#0a0704" stop-opacity="0.30"/><stop offset="0.25" stop-color="#0a0704" stop-opacity="0.53"/><stop offset="0.55" stop-color="#0a0704" stop-opacity="0.73"/><stop offset="0.82" stop-color="#0a0704" stop-opacity="0.91"/><stop offset="1" stop-color="#0a0704" stop-opacity="1.00"/></linearGradient></defs>
<g clip-path="url(#armclip)">
<path d="M560 480L606 480L605.0 540.0L605.4 545.0L635.0 574.5L623.0 594.0L619.0 600.0L611.0 627.0L603.8 660.0L595.2 700.0L595.0 709.0L592.8 748.0L592.5 760.0L593.6 770.0L596.0 788.0L598.6 812L599.5 830 L560 830Z" fill="url(#vel)"/><path d="M700 480L606 480L605.0 540.0L605.4 545.0L635.0 574.5L623.0 594.0L619.0 600.0L611.0 627.0L603.8 660.0L595.2 700.0L595.0 709.0L592.8 748.0L592.5 760.0L593.6 770.0L596.0 788.0L598.6 812L599.5 830 L700 830Z" fill="url(#ver)"/>
<g filter="url(#b08)">
<rect x="575.6" y="488" width="30.7" height="2" fill="url(#alu0)"/>
<rect x="606.0" y="488" width="77.0" height="2" fill="url(#ar0)"/>
<rect x="575.6" y="490" width="30.6" height="2" fill="url(#alu0)"/>
<rect x="605.9" y="490" width="76.9" height="2" fill="url(#ar0)"/>
<rect x="575.6" y="492" width="30.6" height="2" fill="url(#alu0)"/>
<rect x="605.9" y="492" width="76.9" height="2" fill="url(#ar0)"/>
<rect x="575.6" y="494" width="30.6" height="2" fill="url(#alu0)"/>
<rect x="605.9" y="494" width="76.8" height="2" fill="url(#ar0)"/>
<rect x="575.6" y="496" width="30.5" height="2" fill="url(#alu0)"/>
<rect x="605.8" y="496" width="76.8" height="2" fill="url(#ar0)"/>
<rect x="575.6" y="498" width="30.5" height="2" fill="url(#alu0)"/>
<rect x="605.8" y="498" width="76.7" height="2" fill="url(#ar0)"/>
<rect x="575.7" y="500" width="30.3" height="2" fill="url(#alu0)"/>
<rect x="605.8" y="500" width="76.6" height="2" fill="url(#ar0)"/>
<rect x="575.9" y="502" width="30.2" height="2" fill="url(#alu0)"/>
<rect x="605.7" y="502" width="76.5" height="2" fill="url(#ar0)"/>
<rect x="576.0" y="504" width="30.0" height="2" fill="url(#alu0)"/>
<rect x="605.7" y="504" width="76.4" height="2" fill="url(#ar0)"/>
<rect x="576.1" y="506" width="29.8" height="2" fill="url(#alu0)"/>
<rect x="605.6" y="506" width="76.4" height="2" fill="url(#ar0)"/>
<rect x="576.2" y="508" width="29.7" height="2" fill="url(#alu0)"/>
<rect x="605.6" y="508" width="76.3" height="2" fill="url(#ar0)"/>
<rect x="576.4" y="510" width="29.5" height="2" fill="url(#alu0)"/>
<rect x="605.6" y="510" width="76.2" height="2" fill="url(#ar0)"/>
<rect x="576.5" y="512" width="29.3" height="2" fill="url(#alu0)"/>
<rect x="605.5" y="512" width="76.1" height="2" fill="url(#ar0)"/>
<rect x="576.6" y="514" width="29.2" height="2" fill="url(#alu0)"/>
<rect x="605.5" y="514" width="76.0" height="2" fill="url(#ar0)"/>
<rect x="576.7" y="516" width="29.0" height="2" fill="url(#alu0)"/>
<rect x="605.4" y="516" width="76.0" height="2" fill="url(#ar0)"/>
<rect x="576.9" y="518" width="28.8" height="2" fill="url(#alu0)"/>
<rect x="605.4" y="518" width="75.9" height="2" fill="url(#ar0)"/>
<rect x="577.0" y="520" width="28.7" height="2" fill="url(#alu0)"/>
<rect x="605.4" y="520" width="75.8" height="2" fill="url(#ar0)"/>
<rect x="577.1" y="522" width="28.5" height="2" fill="url(#alu0)"/>
<rect x="605.3" y="522" width="75.7" height="2" fill="url(#ar0)"/>
<rect x="577.2" y="524" width="28.3" height="2" fill="url(#alu0)"/>
<rect x="605.3" y="524" width="75.6" height="2" fill="url(#ar0)"/>
<rect x="577.4" y="526" width="28.2" height="2" fill="url(#alu0)"/>
<rect x="605.2" y="526" width="75.6" height="2" fill="url(#ar0)"/>
<rect x="577.5" y="528" width="28.0" height="2" fill="url(#alu0)"/>
<rect x="605.2" y="528" width="75.5" height="2" fill="url(#ar0)"/>
<rect x="577.8" y="530" width="27.7" height="2" fill="url(#alu0)"/>
<rect x="605.2" y="530" width="75.3" height="2" fill="url(#ar0)"/>
<rect x="578.1" y="532" width="27.3" height="2" fill="url(#alu0)"/>
<rect x="605.1" y="532" width="75.2" height="2" fill="url(#ar0)"/>
<rect x="578.4" y="534" width="27.0" height="2" fill="url(#alu0)"/>
<rect x="605.1" y="534" width="75.0" height="2" fill="url(#ar0)"/>
<rect x="578.8" y="536" width="26.6" height="2" fill="url(#alu0)"/>
<rect x="605.1" y="536" width="74.8" height="2" fill="url(#ar0)"/>
<rect x="579.1" y="538" width="26.3" height="2" fill="url(#alu0)"/>
<rect x="605.0" y="538" width="74.7" height="2" fill="url(#ar0)"/>
<rect x="579.4" y="540" width="26.0" height="2" fill="url(#alu0)"/>
<rect x="605.1" y="540" width="74.4" height="2" fill="url(#ar0)"/>
<rect x="579.7" y="542" width="25.9" height="2" fill="url(#alu0)"/>
<rect x="605.2" y="542" width="74.1" height="2" fill="url(#ar0)"/>
<rect x="580.0" y="544" width="25.7" height="2" fill="url(#alu0)"/>
<rect x="605.4" y="544" width="73.7" height="2" fill="url(#ar0)"/>
<rect x="580.8" y="546" width="26.9" height="2" fill="url(#alu0)"/>
<rect x="607.4" y="546" width="71.5" height="2" fill="url(#ar0)"/>
<rect x="581.6" y="548" width="28.1" height="2" fill="url(#alu0)"/>
<rect x="609.4" y="548" width="69.3" height="2" fill="url(#ar0)"/>
<rect x="582.5" y="550" width="29.3" height="2" fill="url(#alu0)"/>
<rect x="611.4" y="550" width="67.1" height="2" fill="url(#ar0)"/>
<rect x="583.3" y="552" width="30.4" height="2" fill="url(#alu0)"/>
<rect x="613.4" y="552" width="64.9" height="2" fill="url(#ar0)"/>
<rect x="584.1" y="554" width="31.6" height="2" fill="url(#alu0)"/>
<rect x="615.4" y="554" width="62.7" height="2" fill="url(#ar0)"/>
<rect x="584.9" y="556" width="32.8" height="2" fill="url(#alu2)"/>
<rect x="617.4" y="556" width="60.5" height="2" fill="url(#ar0)"/>
<rect x="585.7" y="558" width="34.0" height="2" fill="url(#alu3)"/>
<rect x="619.4" y="558" width="58.3" height="2" fill="url(#ar0)"/>
<rect x="586.6" y="560" width="35.2" height="2" fill="url(#alu5)"/>
<rect x="621.5" y="560" width="55.7" height="2" fill="url(#ar0)"/>
<rect x="587.3" y="562" width="36.4" height="2" fill="url(#alu7)"/>
<rect x="623.5" y="562" width="52.9" height="2" fill="url(#ar0)"/>
<rect x="588.1" y="564" width="37.7" height="2" fill="url(#alu8)"/>
<rect x="625.5" y="564" width="50.3" height="2" fill="url(#ar0)"/>
<rect x="588.8" y="566" width="38.9" height="2" fill="url(#alu10)"/>
<rect x="627.5" y="566" width="48.1" height="2" fill="url(#ar0)"/>
<rect x="589.6" y="568" width="40.2" height="2" fill="url(#alu12)"/>
<rect x="629.5" y="568" width="46.0" height="2" fill="url(#ar0)"/>
<rect x="590.4" y="570" width="41.4" height="2" fill="url(#alu13)"/>
<rect x="631.5" y="570" width="43.8" height="2" fill="url(#ar0)"/>
<rect x="590.8" y="572" width="43.0" height="2" fill="url(#alm0)"/>
<rect x="633.5" y="572" width="41.7" height="2" fill="url(#ar0)"/>
<rect x="590.4" y="574" width="44.6" height="2" fill="url(#alm0)"/>
<rect x="634.7" y="574" width="40.3" height="2" fill="url(#ar0)"/>
<rect x="590.0" y="576" width="43.7" height="2" fill="url(#alm0)"/>
<rect x="633.5" y="576" width="41.8" height="2" fill="url(#ar0)"/>
<rect x="589.6" y="578" width="42.9" height="2" fill="url(#alm0)"/>
<rect x="632.2" y="578" width="43.3" height="2" fill="url(#ar0)"/>
<rect x="589.3" y="580" width="42.0" height="2" fill="url(#alm0)"/>
<rect x="631.0" y="580" width="44.7" height="2" fill="url(#ar0)"/>
<rect x="588.9" y="582" width="41.2" height="2" fill="url(#alm0)"/>
<rect x="629.8" y="582" width="46.2" height="2" fill="url(#ar0)"/>
<rect x="588.5" y="584" width="40.3" height="2" fill="url(#alm0)"/>
<rect x="628.5" y="584" width="47.7" height="2" fill="url(#ar0)"/>
<rect x="588.1" y="586" width="39.5" height="2" fill="url(#alm0)"/>
<rect x="627.3" y="586" width="49.2" height="2" fill="url(#ar0)"/>
<rect x="587.7" y="588" width="38.6" height="2" fill="url(#alm0)"/>
<rect x="626.1" y="588" width="50.6" height="2" fill="url(#ar0)"/>
<rect x="587.4" y="590" width="37.8" height="2" fill="url(#alm0)"/>
<rect x="624.8" y="590" width="52.1" height="2" fill="url(#ar0)"/>
<rect x="587.0" y="592" width="36.9" height="2" fill="url(#alm0)"/>
<rect x="623.6" y="592" width="53.6" height="2" fill="url(#ar0)"/>
<rect x="586.6" y="594" width="36.0" height="2" fill="url(#alm0)"/>
<rect x="622.3" y="594" width="55.1" height="2" fill="url(#ar0)"/>
<rect x="586.0" y="596" width="35.3" height="2" fill="url(#alm0)"/>
<rect x="621.0" y="596" width="56.7" height="2" fill="url(#ar0)"/>
<rect x="585.4" y="598" width="34.6" height="2" fill="url(#alm0)"/>
<rect x="619.7" y="598" width="58.2" height="2" fill="url(#ar0)"/>
<rect x="584.8" y="600" width="34.2" height="2" fill="url(#alm0)"/>
<rect x="618.7" y="600" width="59.2" height="2" fill="url(#ar0)"/>
<rect x="584.4" y="602" width="34.0" height="2" fill="url(#alm0)"/>
<rect x="618.1" y="602" width="59.8" height="2" fill="url(#ar0)"/>
<rect x="584.0" y="604" width="33.8" height="2" fill="url(#alm0)"/>
<rect x="617.5" y="604" width="60.5" height="2" fill="url(#ar0)"/>
<rect x="583.6" y="606" width="33.7" height="2" fill="url(#alm0)"/>
<rect x="616.9" y="606" width="61.2" height="2" fill="url(#ar0)"/>
<rect x="583.2" y="608" width="33.5" height="2" fill="url(#alm0)"/>
<rect x="616.3" y="608" width="61.8" height="2" fill="url(#ar0)"/>
<rect x="582.8" y="610" width="33.3" height="2" fill="url(#alm0)"/>
<rect x="615.7" y="610" width="62.5" height="2" fill="url(#ar0)"/>
<rect x="582.3" y="612" width="33.1" height="2" fill="url(#alm0)"/>
<rect x="615.1" y="612" width="63.1" height="2" fill="url(#ar0)"/>
<rect x="581.9" y="614" width="32.9" height="2" fill="url(#alm0)"/>
<rect x="614.6" y="614" width="63.8" height="2" fill="url(#ar0)"/>
<rect x="581.5" y="616" width="32.7" height="2" fill="url(#alm0)"/>
<rect x="614.0" y="616" width="64.4" height="2" fill="url(#ar0)"/>
<rect x="581.3" y="618" width="32.4" height="2" fill="url(#alm0)"/>
<rect x="613.4" y="618" width="65.1" height="2" fill="url(#ar0)"/>
<rect x="581.0" y="620" width="32.0" height="2" fill="url(#alm0)"/>
<rect x="612.8" y="620" width="65.7" height="2" fill="url(#ar0)"/>
<rect x="580.8" y="622" width="31.6" height="2" fill="url(#alm0)"/>
<rect x="612.2" y="622" width="66.4" height="2" fill="url(#ar0)"/>
<rect x="580.6" y="624" width="31.3" height="2" fill="url(#alm0)"/>
<rect x="611.6" y="624" width="67.0" height="2" fill="url(#ar0)"/>
<rect x="580.4" y="626" width="30.9" height="2" fill="url(#alm0)"/>
<rect x="611.0" y="626" width="67.7" height="2" fill="url(#ar0)"/>
<rect x="580.2" y="628" width="30.6" height="2" fill="url(#alm0)"/>
<rect x="610.6" y="628" width="68.0" height="2" fill="url(#ar0)"/>
<rect x="580.0" y="630" width="30.4" height="2" fill="url(#alm0)"/>
<rect x="610.1" y="630" width="68.4" height="2" fill="url(#ar0)"/>
<rect x="579.8" y="632" width="30.2" height="2" fill="url(#alm0)"/>
<rect x="609.7" y="632" width="68.7" height="2" fill="url(#ar0)"/>
<rect x="579.6" y="634" width="30.0" height="2" fill="url(#alm0)"/>
<rect x="609.3" y="634" width="69.1" height="2" fill="url(#ar0)"/>
<rect x="579.4" y="636" width="29.7" height="2" fill="url(#alm0)"/>
<rect x="608.8" y="636" width="69.4" height="2" fill="url(#ar0)"/>
<rect x="579.2" y="638" width="29.5" height="2" fill="url(#alm0)"/>
<rect x="608.4" y="638" width="69.8" height="2" fill="url(#ar0)"/>
<rect x="579.0" y="640" width="29.3" height="2" fill="url(#alm0)"/>
<rect x="607.9" y="640" width="70.1" height="2" fill="url(#ar0)"/>
<rect x="578.8" y="642" width="29.0" height="2" fill="url(#alm0)"/>
<rect x="607.5" y="642" width="70.5" height="2" fill="url(#ar0)"/>
<rect x="578.6" y="644" width="28.8" height="2" fill="url(#alm0)"/>
<rect x="607.1" y="644" width="70.8" height="2" fill="url(#ar0)"/>
<rect x="578.3" y="646" width="28.6" height="2" fill="url(#alm0)"/>
<rect x="606.6" y="646" width="71.2" height="2" fill="url(#ar0)"/>
<rect x="578.1" y="648" width="28.4" height="2" fill="url(#alm0)"/>
<rect x="606.2" y="648" width="71.5" height="2" fill="url(#ar0)"/>
<rect x="577.9" y="650" width="28.1" height="2" fill="url(#alm0)"/>
<rect x="605.8" y="650" width="71.8" height="2" fill="url(#ar0)"/>
<rect x="577.7" y="652" width="27.9" height="2" fill="url(#alm0)"/>
<rect x="605.3" y="652" width="72.0" height="2" fill="url(#ar0)"/>
<rect x="577.5" y="654" width="27.7" height="2" fill="url(#alm0)"/>
<rect x="604.9" y="654" width="72.2" height="2" fill="url(#ar1)"/>
<rect x="577.3" y="656" width="27.4" height="2" fill="url(#alm0)"/>
<rect x="604.5" y="656" width="72.4" height="2" fill="url(#ar1)"/>
<rect x="577.1" y="658" width="27.2" height="2" fill="url(#alm0)"/>
<rect x="604.0" y="658" width="72.6" height="2" fill="url(#ar1)"/>
<rect x="576.9" y="660" width="27.0" height="2" fill="url(#alm0)"/>
<rect x="603.6" y="660" width="72.8" height="2" fill="url(#ar2)"/>
<rect x="576.8" y="662" width="26.7" height="2" fill="url(#alm0)"/>
<rect x="603.2" y="662" width="73.0" height="2" fill="url(#ar2)"/>
<rect x="576.7" y="664" width="26.4" height="2" fill="url(#alm0)"/>
<rect x="602.7" y="664" width="73.2" height="2" fill="url(#ar2)"/>
<rect x="576.5" y="666" width="26.1" height="2" fill="url(#alm0)"/>
<rect x="602.3" y="666" width="73.1" height="2" fill="url(#ar3)"/>
<rect x="576.4" y="668" width="25.8" height="2" fill="url(#alm0)"/>
<rect x="601.9" y="668" width="73.0" height="2" fill="url(#ar3)"/>
<rect x="576.2" y="670" width="25.5" height="2" fill="url(#alm0)"/>
<rect x="601.4" y="670" width="72.8" height="2" fill="url(#ar3)"/>
<rect x="576.1" y="672" width="25.2" height="2" fill="url(#alm1)"/>
<rect x="601.0" y="672" width="72.6" height="2" fill="url(#ar4)"/>
<rect x="576.0" y="674" width="24.9" height="2" fill="url(#alm1)"/>
<rect x="600.6" y="674" width="72.5" height="2" fill="url(#ar4)"/>
<rect x="575.8" y="676" width="24.6" height="2" fill="url(#alm1)"/>
<rect x="600.1" y="676" width="72.3" height="2" fill="url(#ar4)"/>
<rect x="575.7" y="678" width="24.3" height="2" fill="url(#alm2)"/>
<rect x="599.7" y="678" width="72.2" height="2" fill="url(#ar5)"/>
<rect x="575.6" y="680" width="24.0" height="2" fill="url(#alm2)"/>
<rect x="599.3" y="680" width="72.0" height="2" fill="url(#ar5)"/>
<rect x="575.4" y="682" width="23.7" height="2" fill="url(#alm3)"/>
<rect x="598.9" y="682" width="71.9" height="2" fill="url(#ar5)"/>
<rect x="575.3" y="684" width="23.4" height="2" fill="url(#alm3)"/>
<rect x="598.4" y="684" width="71.7" height="2" fill="url(#ar6)"/>
<rect x="575.1" y="686" width="23.2" height="2" fill="url(#alm3)"/>
<rect x="598.0" y="686" width="71.5" height="2" fill="url(#ar6)"/>
<rect x="575.0" y="688" width="22.9" height="2" fill="url(#alm4)"/>
<rect x="597.6" y="688" width="71.4" height="2" fill="url(#ar6)"/>
<rect x="575.0" y="690" width="22.4" height="2" fill="url(#alm4)"/>
<rect x="597.1" y="690" width="71.2" height="2" fill="url(#ar7)"/>
<rect x="575.1" y="692" width="21.9" height="2" fill="url(#alm5)"/>
<rect x="596.7" y="692" width="71.1" height="2" fill="url(#ar7)"/>
<rect x="575.1" y="694" width="21.5" height="2" fill="url(#alm5)"/>
<rect x="596.3" y="694" width="70.9" height="2" fill="url(#ar7)"/>
<rect x="575.1" y="696" width="21.0" height="2" fill="url(#alm5)"/>
<rect x="595.8" y="696" width="70.7" height="2" fill="url(#ar8)"/>
<rect x="575.2" y="698" width="20.5" height="2" fill="url(#alm6)"/>
<rect x="595.4" y="698" width="70.6" height="2" fill="url(#ar8)"/>
<rect x="575.2" y="700" width="20.2" height="2" fill="url(#alm6)"/>
<rect x="595.2" y="700" width="70.1" height="2" fill="url(#ar8)"/>
<rect x="575.3" y="702" width="20.1" height="2" fill="url(#alm7)"/>
<rect x="595.1" y="702" width="69.5" height="2" fill="url(#ar9)"/>
<rect x="575.4" y="704" width="20.0" height="2" fill="url(#alm7)"/>
<rect x="595.1" y="704" width="68.8" height="2" fill="url(#ar9)"/>
<rect x="575.4" y="706" width="19.9" height="2" fill="url(#alm7)"/>
<rect x="595.0" y="706" width="68.2" height="2" fill="url(#ar9)"/>
<rect x="575.5" y="708" width="19.8" height="2" fill="url(#alm8)"/>
<rect x="595.0" y="708" width="67.5" height="2" fill="url(#ar10)"/>
<rect x="575.6" y="710" width="19.6" height="2" fill="url(#alm8)"/>
<rect x="594.9" y="710" width="66.9" height="2" fill="url(#ar10)"/>
<rect x="575.6" y="712" width="19.4" height="2" fill="url(#alm9)"/>
<rect x="594.8" y="712" width="66.3" height="2" fill="url(#ar10)"/>
<rect x="575.7" y="714" width="19.2" height="2" fill="url(#alm9)"/>
<rect x="594.7" y="714" width="65.7" height="2" fill="url(#ar11)"/>
<rect x="575.8" y="716" width="19.1" height="2" fill="url(#alm9)"/>
<rect x="594.5" y="716" width="65.1" height="2" fill="url(#ar11)"/>
<rect x="575.9" y="718" width="18.9" height="2" fill="url(#alm10)"/>
<rect x="594.4" y="718" width="64.6" height="2" fill="url(#ar11)"/>
<rect x="575.9" y="720" width="18.7" height="2" fill="url(#alm10)"/>
<rect x="594.3" y="720" width="64.0" height="2" fill="url(#ar12)"/>
<rect x="576.0" y="722" width="18.5" height="2" fill="url(#alm11)"/>
<rect x="594.2" y="722" width="63.4" height="2" fill="url(#ar12)"/>
<rect x="576.1" y="724" width="18.3" height="2" fill="url(#alm11)"/>
<rect x="594.1" y="724" width="62.8" height="2" fill="url(#ar12)"/>
<rect x="576.1" y="726" width="18.2" height="2" fill="url(#alm11)"/>
<rect x="594.0" y="726" width="62.2" height="2" fill="url(#ar13)"/>
<rect x="576.2" y="728" width="18.0" height="2" fill="url(#alm12)"/>
<rect x="593.9" y="728" width="61.6" height="2" fill="url(#ar13)"/>
<rect x="576.3" y="730" width="17.8" height="2" fill="url(#alm12)"/>
<rect x="593.8" y="730" width="61.0" height="2" fill="url(#ar13)"/>
<rect x="576.3" y="732" width="17.6" height="2" fill="url(#alm13)"/>
<rect x="593.6" y="732" width="60.4" height="2" fill="url(#ar14)"/>
<rect x="576.4" y="734" width="17.4" height="2" fill="url(#alm13)"/>
<rect x="593.5" y="734" width="59.9" height="2" fill="url(#ar14)"/>
<rect x="576.5" y="736" width="17.3" height="2" fill="url(#alm13)"/>
<rect x="593.4" y="736" width="59.3" height="2" fill="url(#ar14)"/>
<rect x="576.5" y="738" width="17.1" height="2" fill="url(#alm14)"/>
<rect x="593.3" y="738" width="58.8" height="2" fill="url(#ar14)"/>
<rect x="576.6" y="740" width="16.9" height="2" fill="url(#alm14)"/>
<rect x="593.2" y="740" width="58.5" height="2" fill="url(#ar14)"/>
<rect x="576.7" y="742" width="16.7" height="2" fill="url(#alm14)"/>
<rect x="593.1" y="742" width="58.2" height="2" fill="url(#ar14)"/>
<rect x="576.8" y="744" width="16.5" height="2" fill="url(#alm14)"/>
<rect x="593.0" y="744" width="57.9" height="2" fill="url(#ar14)"/>
<rect x="576.9" y="746" width="16.3" height="2" fill="url(#alm14)"/>
<rect x="592.9" y="746" width="57.7" height="2" fill="url(#ar14)"/>
<rect x="577.0" y="748" width="16.1" height="2" fill="url(#alm14)"/>
<rect x="592.8" y="748" width="57.4" height="2" fill="url(#ar14)"/>
<rect x="577.0" y="750" width="16.0" height="2" fill="url(#alm14)"/>
<rect x="592.7" y="750" width="57.0" height="2" fill="url(#ar14)"/>
<rect x="577.1" y="752" width="15.9" height="2" fill="url(#alm14)"/>
<rect x="592.7" y="752" width="56.7" height="2" fill="url(#ar14)"/>
<rect x="577.2" y="754" width="15.7" height="2" fill="url(#alm14)"/>
<rect x="592.6" y="754" width="56.3" height="2" fill="url(#ar14)"/>
<rect x="577.3" y="756" width="15.6" height="2" fill="url(#alm14)"/>
<rect x="592.6" y="756" width="56.0" height="2" fill="url(#ar14)"/>
<rect x="577.4" y="758" width="15.5" height="2" fill="url(#alm14)"/>
<rect x="592.5" y="758" width="55.7" height="2" fill="url(#ar14)"/>
<rect x="577.5" y="760" width="15.4" height="2" fill="url(#alm14)"/>
<rect x="592.6" y="760" width="55.1" height="2" fill="url(#ar14)"/>
<rect x="577.6" y="762" width="15.6" height="2" fill="url(#alm14)"/>
<rect x="592.8" y="762" width="54.2" height="2" fill="url(#ar14)"/>
<rect x="577.7" y="764" width="15.6" height="2" fill="url(#alm14)"/>
<rect x="593.0" y="764" width="53.3" height="2" fill="url(#ar14)"/>
<rect x="577.8" y="766" width="15.8" height="2" fill="url(#alm14)"/>
<rect x="593.3" y="766" width="52.4" height="2" fill="url(#ar14)"/>
<rect x="577.9" y="768" width="15.8" height="2" fill="url(#alm14)"/>
<rect x="593.5" y="768" width="51.5" height="2" fill="url(#ar14)"/>
<rect x="578.0" y="770" width="16.0" height="2" fill="url(#alm14)"/>
<rect x="593.7" y="770" width="50.7" height="2" fill="url(#ar14)"/>
<rect x="578.1" y="772" width="16.2" height="2" fill="url(#alm14)"/>
<rect x="594.0" y="772" width="49.8" height="2" fill="url(#ar14)"/>
<rect x="578.1" y="774" width="16.4" height="2" fill="url(#alm14)"/>
<rect x="594.3" y="774" width="48.9" height="2" fill="url(#ar14)"/>
<rect x="578.2" y="776" width="16.7" height="2" fill="url(#alm14)"/>
<rect x="594.5" y="776" width="48.1" height="2" fill="url(#ar14)"/>
<rect x="578.2" y="778" width="16.9" height="2" fill="url(#alm14)"/>
<rect x="594.8" y="778" width="47.4" height="2" fill="url(#ar14)"/>
<rect x="578.3" y="780" width="17.1" height="2" fill="url(#alm14)"/>
<rect x="595.1" y="780" width="46.7" height="2" fill="url(#ar14)"/>
<rect x="578.3" y="782" width="17.3" height="2" fill="url(#alm14)"/>
<rect x="595.3" y="782" width="46.1" height="2" fill="url(#ar14)"/>
<rect x="578.4" y="784" width="17.5" height="2" fill="url(#alm14)"/>
<rect x="595.6" y="784" width="45.4" height="2" fill="url(#ar14)"/>
<rect x="578.4" y="786" width="17.8" height="2" fill="url(#alm14)"/>
<rect x="595.9" y="786" width="44.8" height="2" fill="url(#ar14)"/>
<rect x="578.5" y="788" width="18.0" height="2" fill="url(#alm14)"/>
<rect x="596.1" y="788" width="44.2" height="2" fill="url(#ar14)"/>
<rect x="578.5" y="790" width="18.1" height="2" fill="url(#alm14)"/>
<rect x="596.3" y="790" width="43.6" height="2" fill="url(#ar14)"/>
<rect x="578.5" y="792" width="18.3" height="2" fill="url(#alm14)"/>
<rect x="596.5" y="792" width="43.0" height="2" fill="url(#ar14)"/>
<rect x="578.6" y="794" width="18.5" height="2" fill="url(#alm14)"/>
<rect x="596.8" y="794" width="42.4" height="2" fill="url(#ar14)"/>
<rect x="578.6" y="796" width="18.6" height="2" fill="url(#alm14)"/>
<rect x="597.0" y="796" width="41.8" height="2" fill="url(#ar14)"/>
<rect x="578.7" y="798" width="18.8" height="2" fill="url(#alm14)"/>
<rect x="597.2" y="798" width="41.2" height="2" fill="url(#ar14)"/>
<rect x="578.7" y="800" width="19.0" height="2" fill="url(#alm14)"/>
<rect x="597.4" y="800" width="40.6" height="2" fill="url(#ar14)"/>
<rect x="578.8" y="802" width="19.1" height="2" fill="url(#alm14)"/>
<rect x="597.6" y="802" width="40.1" height="2" fill="url(#ar14)"/>
<rect x="578.8" y="804" width="19.3" height="2" fill="url(#alm14)"/>
<rect x="597.8" y="804" width="39.5" height="2" fill="url(#ar14)"/>
<rect x="578.9" y="806" width="19.5" height="2" fill="url(#alm14)"/>
<rect x="598.1" y="806" width="38.9" height="2" fill="url(#ar14)"/>
<rect x="578.9" y="808" width="19.6" height="2" fill="url(#alm14)"/>
<rect x="598.3" y="808" width="38.3" height="2" fill="url(#ar14)"/>
<rect x="579.0" y="810" width="19.8" height="2" fill="url(#alm14)"/>
<rect x="598.5" y="810" width="37.7" height="2" fill="url(#ar14)"/>
<rect x="579.0" y="812" width="19.9" height="2" fill="url(#alm14)"/>
<rect x="598.6" y="812" width="37.4" height="2" fill="url(#ar14)"/>
<rect x="579.0" y="814" width="19.9" height="2" fill="url(#alm14)"/>
<rect x="598.6" y="814" width="37.2" height="2" fill="url(#ar14)"/>
<rect x="579.0" y="816" width="19.9" height="2" fill="url(#alm14)"/>
<rect x="598.6" y="816" width="37.1" height="2" fill="url(#ar14)"/>
<rect x="579.0" y="818" width="19.9" height="2" fill="url(#alm14)"/>
<rect x="598.6" y="818" width="37.0" height="2" fill="url(#ar14)"/>
<rect x="579.0" y="820" width="19.9" height="2" fill="url(#alm14)"/>
<rect x="598.6" y="820" width="37.0" height="2" fill="url(#ar14)"/>
<rect x="579.0" y="822" width="19.9" height="2" fill="url(#alm14)"/>
<rect x="598.6" y="822" width="37.0" height="2" fill="url(#ar14)"/>
<path d="M606.0 488.0L605.0 540.0L605.4 545.0L635.0 574.5L623.0 594.0L619.0 600.0L611.0 627.0L603.8 660.0L595.2 700.0L595.0 709.0L592.8 748.0L592.5 760.0L593.6 770.0L596.0 788.0L598.6 812.0" stroke="#0a0704" stroke-width="1.8" fill="none"/></g>
<ellipse cx="651" cy="574" rx="12" ry="15" fill="#0a0704" filter="url(#b7)" opacity=".45"/>
<path d="M576 499L577 640L576 812" stroke="#c09a74" stroke-width="1.2" fill="none" opacity="0"/>
<path d="M579 809.5L629.7 814.2L635.6 817.4L608 823.5Z" fill="#dab291"/>
<path d="M622 813.5L629.7 814.2L635.6 817.4L622 820.5Z" fill="#b8926f"/>

</g>
<!--ARM-END-->

<!-- axes gizmo -->
<path d="M222 868.5H252.5" stroke="#00920a" stroke-width="1.3"/>
<path d="M252.5 839V869.2" stroke="#0000c8" stroke-width="1.3"/>
<g font-family="Liberation Sans, sans-serif" font-size="11.5">
 <text transform="translate(254.8 834) scale(1.16 1)" fill="#0000d2">z</text>
 <text transform="translate(255.4 855.2) scale(1.16 1)" fill="#d00000">x</text>
 <text transform="translate(223.6 863.9) scale(1.25 1)" fill="#009a08">y</text>
</g>

</svg>
</div>
<div id="vpb"></div>
<div class="h" style="left:284px;top:34px">FPS: <span class="v" style="left:-1.5px">60,16</span></div>
<div class="h" style="left:249px;top:59px">Polygons: <span class="v" style="left:-1.5px">1.002</span></div>
<div class="h" style="left:249px;top:73px">Vertices: <span class="v" style="left:-1.5px">716</span></div>
<div class="h g" style="left:222px;top:92px">[ More information ]</div>
<div class="h" style="left:640px;top:34px"><span style="color:#c4ae22;text-shadow:0 0 .6px #c4ae22">Geometry</span><span class="v" style="color:#d4be24;left:-1.5px"> | </span><span class="v" style="color:#8e959f;left:-3px">Skeleton</span></div>
<div class="h g" style="left:1054px;top:34px">Click here for help</div>
<div class="h" style="left:1054px;top:59px">Camera mode: <span class="g v">Around</span></div>
<div class="h" style="left:1068px;top:73px">Show grid: <span class="g v">True</span></div>
<div class="h" style="left:1075px;top:101px">Geometry: <span class="g v">True</span></div>
<div class="h" style="left:1054px;top:115px">Edged Faces: <span class="g v">False</span></div>
<div class="h" style="left:1033px;top:129px">Display Points: <span class="g v">False</span></div>
<div class="h" style="left:1026px;top:143px">Level of Detail: <span class="g v">High</span></div>
<div class="h" style="left:1083px;top:850px">Using textures:</div>
<div class="h" style="left:1065px;top:868px"><span style="color:#2fb24a">m_y_pmedic.wtd</span><span class="g v" style="left:-2px"> [-]</span></div>
<div class="h g" style="left:1083px;top:886px">[+] Add texture</div>

</body>
</html>
